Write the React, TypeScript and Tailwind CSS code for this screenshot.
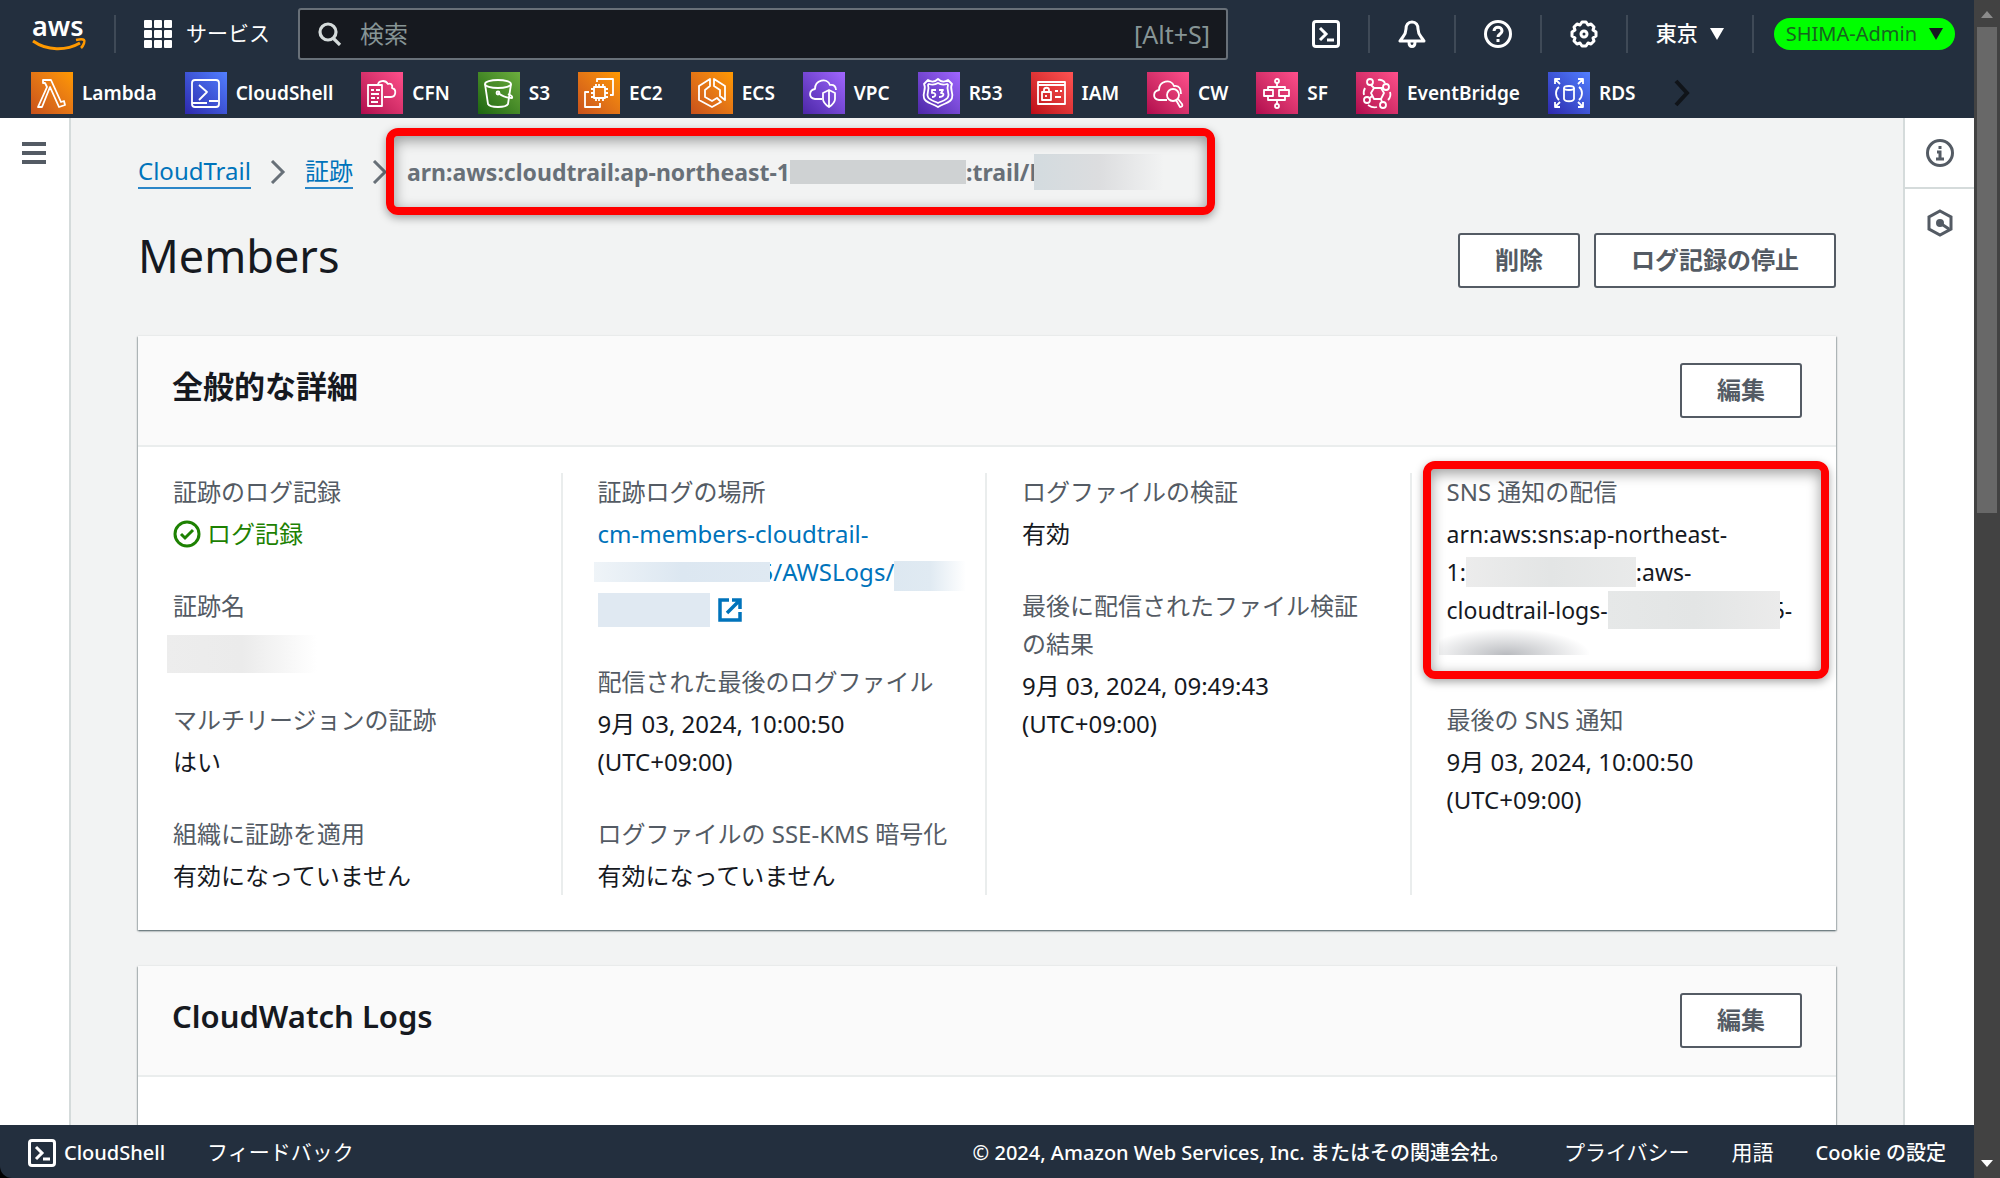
import type { ReactNode } from 'react';

const gradients = {
  orange: 'bg-linear-to-tr from-[#c8511b] to-[#ff9900]',
  blue: 'bg-linear-to-tr from-[#2e27ad] to-[#527fff]',
  pink: 'bg-linear-to-tr from-[#b0084d] to-[#ff4f8b]',
  green: 'bg-linear-to-tr from-[#1b660f] to-[#6cae3e]',
  purple: 'bg-linear-to-tr from-[#4d27a8] to-[#a166ff]',
  red: 'bg-linear-to-tr from-[#bd0816] to-[#ff5252]',
};

const services: { name: string; color: keyof typeof gradients; icon: ReactNode }[] = [
  {
    name: 'Lambda',
    color: 'orange',
    icon: <path d="M13 8h7l10 22 3-1 1 4-6 2-9-20-8 20H7l9-20-2-4h-2V8z" />,
  },
  {
    name: 'CloudShell',
    color: 'blue',
    icon: (
      <>
        <rect x="7" y="8" width="27" height="27" rx="3" />
        <path d="M7 31h15M14 13l8 7-8 8M24 29h9" />
      </>
    ),
  },
  {
    name: 'CFN',
    color: 'pink',
    icon: (
      <>
        <rect x="7" y="13" width="14" height="21" />
        <path d="M10 18h3M15 18h4M10 22h8M10 26h4M16 26h2M10 30h7M17 13c0-4 7-6 10-1 3-1 5 1 4 4 5 1 4 9-1 9h-7" />
      </>
    ),
  },
  {
    name: 'S3',
    color: 'green',
    icon: (
      <>
        <ellipse cx="20" cy="12" rx="13" ry="4" />
        <path d="M7 12l3 20c2 4 18 4 20 0l3-20M20 21c4 3 9 5 14 5 1-2-2-3-4-4" />
        <circle cx="20" cy="21" r="1.5" />
      </>
    ),
  },
  {
    name: 'EC2',
    color: 'orange',
    icon: (
      <>
        <rect x="16" y="15" width="11" height="11" />
        <path d="M18 15v-3M21 15v-3M25 15v-3M18 29v-3M21 29v-3M25 29v-3M16 17h-3M16 21h-3M16 25h-3M30 17h-3M30 21h-3M30 25h-3M19 10V7h16v16h-3M11 20H7v15h15v-4" />
      </>
    ),
  },
  {
    name: 'ECS',
    color: 'orange',
    icon: <path d="M19 7L8 14v14l13 7 9-5-4-4-5 3-7-4v-7l5-4zM23 7l11 7v14l-5-4v-6l-6-4z" />,
  },
  {
    name: 'VPC',
    color: 'purple',
    icon: (
      <>
        <path d="M19 27h-7c-7-1-6-9 0-10 0-9 12-12 15-4 4-1 6 2 6 5" />
        <path d="M26 18l6 3v6c0 4-3 6-6 8-3-2-6-4-6-8v-6zM26 18v17" />
      </>
    ),
  },
  {
    name: 'R53',
    color: 'purple',
    icon: (
      <>
        <path d="M20 7c3 3 7 3 10 1l4 4c-3 5 2 9 0 14-1 5-8 5-14 9-6-4-13-4-14-9-2-5 3-9 0-14l4-4c3 2 7 2 10-1z" />
        <path d="M20 11c3 2 6 2 9 1l1 1c-2 5 2 8 0 12-1 3-6 4-10 6-4-2-9-3-10-6-2-4 2-7 0-12l1-1c3 1 6 1 9-1z" />
        <path d="M18 18h-4v3c4-1 5 4 0 4M21 18h4l-2 3c4 0 3 4-2 4" />
      </>
    ),
  },
  {
    name: 'IAM',
    color: 'red',
    icon: (
      <>
        <rect x="7" y="10" width="27" height="22" />
        <rect x="11" y="20" width="9" height="8" />
        <path d="M7 13h27M13 20v-2c0-3 5-3 5 0v2M15 23v2M24 19h3M29 19h2M24 25h6" />
      </>
    ),
  },
  {
    name: 'CW',
    color: 'pink',
    icon: (
      <>
        <path d="M20 28h-8c-7-1-6-9 0-10 0-9 12-12 15-4 6-1 7 4 7 8" />
        <circle cx="26" cy="23" r="6" />
        <path d="M29 28l4 7c2 0 3-1 2-3l-4-5" />
      </>
    ),
  },
  {
    name: 'SF',
    color: 'pink',
    icon: (
      <>
        <circle cx="21" cy="9" r="2" />
        <circle cx="21" cy="34" r="2" />
        <rect x="8" y="18" width="9" height="6" />
        <rect x="23" y="18" width="10" height="6" />
        <path d="M21 11v4M12 18v-3h17v3M12 24v4h17v-4M21 28v4" />
      </>
    ),
  },
  {
    name: 'EventBridge',
    color: 'pink',
    icon: (
      <>
        <path d="M18 16h7l3 5-3 6h-7l-3-6z" />
        <circle cx="14" cy="10" r="3" />
        <circle cx="30" cy="15" r="3" />
        <circle cx="11" cy="28" r="3" />
        <circle cx="27" cy="33" r="3" />
        <path d="M15 13l3 3M25 16l3 0M14 26l2-2M25 27l1 3M22 8c3-1 6 1 7 3M34 20c1 3 0 6-2 8M21 35c-3 1-6 0-9-2M8 23c-1-3 0-5 1-7" />
      </>
    ),
  },
  {
    name: 'RDS',
    color: 'blue',
    icon: (
      <>
        <ellipse cx="21" cy="16" rx="5" ry="2" />
        <path d="M16 16v11c1 3 9 3 10 0V16M11 15c-4 3-4 9 0 13M31 15c4 3 4 9 0 13M7 12V7h5M7 7l5 5M30 7h5v5M35 7l-5 5M7 30v5h5M7 35l5-5M30 35h5v-5M35 35l-5-5" />
      </>
    ),
  },
];

function ShellIcon() {
  return (
    <svg className="size-7" viewBox="0 0 28 28" fill="none" stroke="currentColor" strokeWidth="3">
      <rect x="1.5" y="1.5" width="25" height="25" rx="2.5" />
      <path d="M8 8l6 6-6 6M15 20h7" />
    </svg>
  );
}

function Chevron() {
  return (
    <svg className="h-6 w-4 shrink-0" viewBox="0 0 16 24" fill="none" stroke="#687078" strokeWidth="3">
      <path d="M2 1l11 11L2 23" />
    </svg>
  );
}

function Divider() {
  return <span className="h-[38px] w-0.5 shrink-0 bg-[#3f4a57]" />;
}

function Frame({ className }: { className: string }) {
  return (
    <span
      className={`pointer-events-none absolute rounded-xl border-8 border-[#ff0000] shadow-[0_3px_9px_rgba(0,0,0,0.35),inset_0_4px_14px_rgba(0,0,0,0.4)] ${className}`}
    />
  );
}

function Button({ children }: { children: ReactNode }) {
  return (
    <button
      type="button"
      className="h-[55px] rounded-[3px] border-2 border-[#545b64] bg-white px-[35px] pb-0.5 text-2xl leading-8 font-bold whitespace-nowrap text-[#545b64]"
    >
      {children}
    </button>
  );
}

function Field({ label, framed, children }: { label: string; framed?: boolean; children: ReactNode }) {
  return (
    <div className="relative">
      {framed && <Frame className="-top-3 -right-7 -bottom-3 -left-6" />}
      <dt className="mb-1 text-[#545b64]">{label}</dt>
      <dd>{children}</dd>
    </div>
  );
}

function Card({ title, children }: { title: string; children: ReactNode }) {
  return (
    <section className="bg-white shadow-[0_1px_2px_rgba(0,28,36,0.5),-1px_1px_1px_rgba(0,28,36,0.15),1px_1px_1px_rgba(0,28,36,0.15)]">
      <div className="flex items-start justify-between border-b-2 border-[#eaeded] bg-[#fafafa] px-[34px] py-[27px]">
        <h2 className="text-[31px] leading-[46px] font-semibold">{title}</h2>
        <Button>編集</Button>
      </div>
      {children}
    </section>
  );
}

export default function App() {
  return (
    <div className="flex h-screen overflow-hidden bg-[#424242] font-['Noto_Sans','Noto_Sans_CJK_JP',sans-serif] text-2xl leading-[38px] text-[#16191f]">
      <div className="flex min-w-0 flex-1 flex-col bg-[#f2f3f3]">
        <header className="h-[118px] shrink-0 bg-[#232f3e] text-xl text-white">
          <div className="flex h-[68px] items-center pr-[19px] pl-8">
            <a href="#" aria-label="aws" className="shrink-0">
              <svg className="size-14" viewBox="0 -8 56 56" fill="none">
                <text x="0" y="22" fill="#fff" fontFamily="Noto Sans" fontSize="27" fontWeight="600">
                  aws
                </text>
                <path d="M1 27c14 10 33 10 47 2" stroke="#f90" strokeWidth="3" />
                <path d="M44 26c4-1 7-1 8 0s0 5-3 8" stroke="#f90" strokeWidth="2.5" />
              </svg>
            </a>
            <div className="mr-7 ml-[26px] flex">
              <Divider />
            </div>
            <button type="button" className="flex shrink-0 items-center gap-3.5">
              <svg className="size-7" viewBox="0 0 28 28" fill="#fff">
                {[0, 10, 20].map((y) =>
                  [0, 10, 20].map((x) => <rect key={`${x}-${y}`} x={x} y={y} width="8" height="8" rx="1" />),
                )}
              </svg>
              <span className="text-[21px]">サービス</span>
            </button>
            <label className="ml-7 flex h-[52px] w-[930px] min-w-0 items-center rounded-[3px] border-2 border-[#687078] bg-[#16191f] pr-4 pl-[18px]">
              <svg className="size-6 shrink-0" viewBox="0 0 24 24" fill="none" stroke="#d5dbdb" strokeWidth="3.2">
                <circle cx="10" cy="10" r="8" />
                <path d="M15 16l7 7" />
              </svg>
              <input
                type="text"
                aria-label="検索"
                placeholder="検索"
                className="ml-[18px] min-w-0 flex-1 bg-transparent text-2xl outline-none placeholder:text-[#879596]"
              />
              <span className="text-[25px] text-[#879596]">[Alt+S]</span>
            </label>
            <div className="ml-auto flex items-center gap-7">
              <button type="button" aria-label="CloudShell">
                <ShellIcon />
              </button>
              <Divider />
              <button type="button" aria-label="通知">
                <svg className="size-7" viewBox="0 0 28 28" fill="none" stroke="#fff" strokeWidth="3" strokeLinejoin="round">
                  <path d="M14 2c-4 0-6 3-6 7 0 6-3 7-6 12h24c-3-5-6-6-6-12 0-4-2-7-6-7z" />
                  <path d="M11 22c0 6 6 6 6 0" />
                </svg>
              </button>
              <Divider />
              <button type="button" aria-label="ヘルプ">
                <svg className="size-7" viewBox="0 0 28 28" fill="none" stroke="#fff" strokeWidth="3">
                  <circle cx="14" cy="14" r="12.5" />
                  <path d="M10 11c0-5 8-5 8 0 0 3-4 3-4 6M14 19v3" />
                </svg>
              </button>
              <Divider />
              <button type="button" aria-label="設定">
                <svg className="size-7" viewBox="0 0 28 28" fill="none" stroke="#fff" strokeWidth="3" strokeLinejoin="round">
                  <path d="M12 2h4l2 3 3-1 3 3-1 3 3 2v4l-3 2 1 3-3 3-3-1-2 3h-4l-2-3-3 1-3-3 1-3-3-2v-4l3-2-1-3 3-3 3 1z" />
                  <circle cx="14" cy="14" r="3" />
                </svg>
              </button>
              <Divider />
              <button type="button" className="flex items-center gap-3 text-[21px] font-medium">
                東京
                <svg className="h-3 w-3.5" viewBox="0 0 14 12" fill="#fff">
                  <path d="M0 0h14L7 12z" />
                </svg>
              </button>
              <Divider />
              <button
                type="button"
                className="-ml-2 flex h-8 items-center gap-3 rounded-full bg-[#00ff00] px-3 text-[#17641f]"
              >
                SHIMA-Admin
                <svg className="h-3 w-3.5" viewBox="0 0 14 12" fill="#16191f">
                  <path d="M0 0h14L7 12z" />
                </svg>
              </button>
            </div>
          </div>
          <nav className="flex items-center gap-7 pt-1 pl-[31px]">
            {services.map((service) => (
              <a key={service.name} href="#" className="flex items-center gap-[9px] text-[19px] leading-[42px] font-semibold">
                <span className={`size-[42px] ${gradients[service.color]}`}>
                  <svg viewBox="0 0 42 42" fill="none" stroke="#fff" strokeWidth="1.8" strokeLinejoin="round">
                    {service.icon}
                  </svg>
                </span>
                {service.name}
              </a>
            ))}
            <button type="button" aria-label="次へ" className="ml-2">
              <svg className="h-7 w-5" viewBox="0 0 20 28" fill="none" stroke="#101419" strokeWidth="4">
                <path d="M4 2l11 12L4 26" />
              </svg>
            </button>
          </nav>
        </header>

        <div className="flex min-h-0 flex-1 overflow-hidden">
          <aside className="w-[71px] shrink-0 border-r-2 border-[#d5dbdb] bg-white pt-6 pl-[22px]">
            <button type="button" aria-label="メニュー" className="flex w-6 flex-col gap-[5px]">
              <span className="h-1 bg-[#545b64]" />
              <span className="h-1 bg-[#545b64]" />
              <span className="h-1 bg-[#545b64]" />
            </button>
          </aside>

          <main className="min-w-0 flex-1 overflow-hidden px-[67px] pt-[35px]">
            <nav className="flex items-center gap-[19px]">
              <a href="#" className="border-b-2 border-[#2a86c8] leading-8 text-[#0073bb]">
                CloudTrail
              </a>
              <Chevron />
              <a href="#" className="border-b-2 border-[#2a86c8] leading-8 text-[#0073bb]">
                証跡
              </a>
              <Chevron />
              <span className="relative flex items-center text-[23px] font-bold whitespace-nowrap text-[#687078]">
                arn:aws:cloudtrail:ap-northeast-1
                <span className="h-6 w-[176px] bg-[#cfd2d3]" />
                :trail/M
                <span className="relative -ml-[17px] h-9 w-[130px] bg-linear-to-r from-[#d3dbdf] via-[#dcdddf] to-[#f2f3f3]" />
                <Frame className="-top-[25px] -right-[51px] -bottom-6 -left-[21px]" />
              </span>
            </nav>

            <div className="mt-[42px] mb-12 flex items-start justify-between">
              <h1 className="text-[45px] leading-[46px]">Members</h1>
              <div className="flex gap-3.5">
                <Button>削除</Button>
                <Button>ログ記録の停止</Button>
              </div>
            </div>

            <div className="flex flex-col gap-9">
              <Card title="全般的な詳細">
                <dl className="grid grid-cols-4 divide-x-2 divide-[#eaeded] pt-[26px] pb-[35px]">
                  <div className="flex flex-col gap-[34px] px-[35px]">
                    <Field label="証跡のログ記録">
                      <span className="flex items-center gap-1.5 text-[#1d8102]">
                        <svg className="size-7" viewBox="0 0 28 28" fill="none" stroke="currentColor" strokeWidth="3">
                          <circle cx="14" cy="14" r="12" />
                          <path d="M8 14l4 4 8-8" />
                        </svg>
                        ログ記録
                      </span>
                    </Field>
                    <Field label="証跡名">
                      <span className="block h-[38px] pt-1.5">
                        <span className="-ml-1.5 block h-[38px] w-[150px] bg-linear-to-r from-[#ededed] via-[#ebebeb] to-white" />
                      </span>
                    </Field>
                    <Field label="マルチリージョンの証跡">はい</Field>
                    <Field label="組織に証跡を適用">有効になっていません</Field>
                  </div>
                  <div className="flex flex-col gap-[34px] px-[35px]">
                    <Field label="証跡ログの場所">
                      <a href="#" className="block whitespace-nowrap text-[#0073bb]">
                        cm-members-cloudtrail-
                        <span className="flex h-[38px] items-center">
                          <span className="relative -mr-2.5 -ml-1 h-5 w-44 shrink-0 bg-linear-to-r from-[#eff4f8] via-[#dce7f1] to-[#dfe9f2]" />
                          5/AWSLogs/
                          <span className="mt-2 h-[30px] w-[72px] shrink-0 bg-linear-to-r from-[#dde8f1] via-[#e0eaf2] to-white" />
                        </span>
                        <span className="flex h-[38px] items-center gap-2">
                          <span className="h-[34px] w-28 bg-[#e0e9f2]" />
                          <svg className="size-6" viewBox="0 0 24 24" fill="none" stroke="currentColor" strokeWidth="3.5">
                            <path d="M11 2H2v20h20v-8M14 2h8v9M21 3L9 15" />
                          </svg>
                        </span>
                      </a>
                    </Field>
                    <Field label="配信された最後のログファイル">
                      9月 03, 2024, 10:00:50
                      <br />
                      (UTC+09:00)
                    </Field>
                    <Field label="ログファイルの SSE-KMS 暗号化">有効になっていません</Field>
                  </div>
                  <div className="flex flex-col gap-[34px] px-[35px]">
                    <Field label="ログファイルの検証">有効</Field>
                    <Field label="最後に配信されたファイル検証の結果">
                      9月 03, 2024, 09:49:43
                      <br />
                      (UTC+09:00)
                    </Field>
                  </div>
                  <div className="flex flex-col gap-[34px] px-[35px]">
                    <Field label="SNS 通知の配信" framed>
                      <span className="block text-[23px] whitespace-nowrap">
                        arn:aws:sns:ap-northeast-
                        <span className="flex h-[38px] items-center">
                          1:
                          <span className="h-[30px] w-[170px] bg-linear-to-r from-[#ececec] via-[#e3e5e5] to-[#e9eaea]" />
                          :aws-
                        </span>
                        <span className="flex h-[38px] items-center">
                          cloudtrail-logs-
                          <span className="relative -mr-2 h-[38px] w-[172px] bg-linear-to-r from-[#e6e8e8] via-[#e3e5e5] to-[#ebebeb]" />
                          5-
                        </span>
                        <span className="block h-[38px]">
                          <span className="-ml-2 block h-[26px] w-[150px] bg-[radial-gradient(ellipse_at_45%_100%,#b9bbbf,#fff_72%)]" />
                        </span>
                      </span>
                    </Field>
                    <Field label="最後の SNS 通知">
                      9月 03, 2024, 10:00:50
                      <br />
                      (UTC+09:00)
                    </Field>
                  </div>
                </dl>
              </Card>

              <Card title="CloudWatch Logs">
                <div className="h-24" />
              </Card>
            </div>
          </main>

          <aside className="flex w-[71px] shrink-0 flex-col border-l-2 border-[#d5dbdb] bg-white text-[#545b64]">
            <button type="button" aria-label="情報" className="flex h-[71px] items-center justify-center border-b-2 border-[#d5dbdb]">
              <svg className="size-7" viewBox="0 0 28 28" fill="none" stroke="currentColor" strokeWidth="3">
                <circle cx="14" cy="14" r="12.5" />
                <path d="M14 7v3M11 13h3v7M10 20h8" />
              </svg>
            </button>
            <button type="button" aria-label="設定パネル" className="flex h-[68px] items-center justify-center">
              <svg className="size-7" viewBox="0 0 28 28" fill="none" stroke="currentColor" strokeWidth="3">
                <path d="M14 2l11 6v12l-11 6-11-6V8z" />
                <path d="M14 14l9 6" />
                <circle cx="14" cy="14" r="2.5" fill="currentColor" />
              </svg>
            </button>
          </aside>
        </div>

        <footer className="bg-black">
          <div className="flex h-[53px] items-center rounded-bl-xl bg-[#232f3e] px-7 pt-0.5 text-xl font-medium text-white">
            <button type="button" className="flex items-center gap-2">
              <ShellIcon />
              CloudShell
            </button>
            <a href="#" className="ml-[42px] text-[21px] font-normal">
              フィードバック
            </a>
            <p className="ml-auto">© 2024, Amazon Web Services, Inc. またはその関連会社。</p>
            <a href="#" className="ml-[54px] text-[21px] font-normal">
              プライバシー
            </a>
            <a href="#" className="ml-[42px] text-[21px] font-normal">
              用語
            </a>
            <a href="#" className="ml-[42px]">
              Cookie の設定
            </a>
          </div>
        </footer>
      </div>

      <div className="flex w-[26px] shrink-0 flex-col items-center py-[11px]">
        <svg className="h-[7px] w-3 shrink-0" viewBox="0 0 12 7" fill="#8b8b8b">
          <path d="M0 7h12L6 0z" />
        </svg>
        <span className="mt-[9px] h-[42%] w-5 bg-[#686868]" />
        <svg className="mt-auto h-[7px] w-3 shrink-0" viewBox="0 0 12 7" fill="#fff">
          <path d="M0 0h12L6 7z" />
        </svg>
      </div>
    </div>
  );
}
